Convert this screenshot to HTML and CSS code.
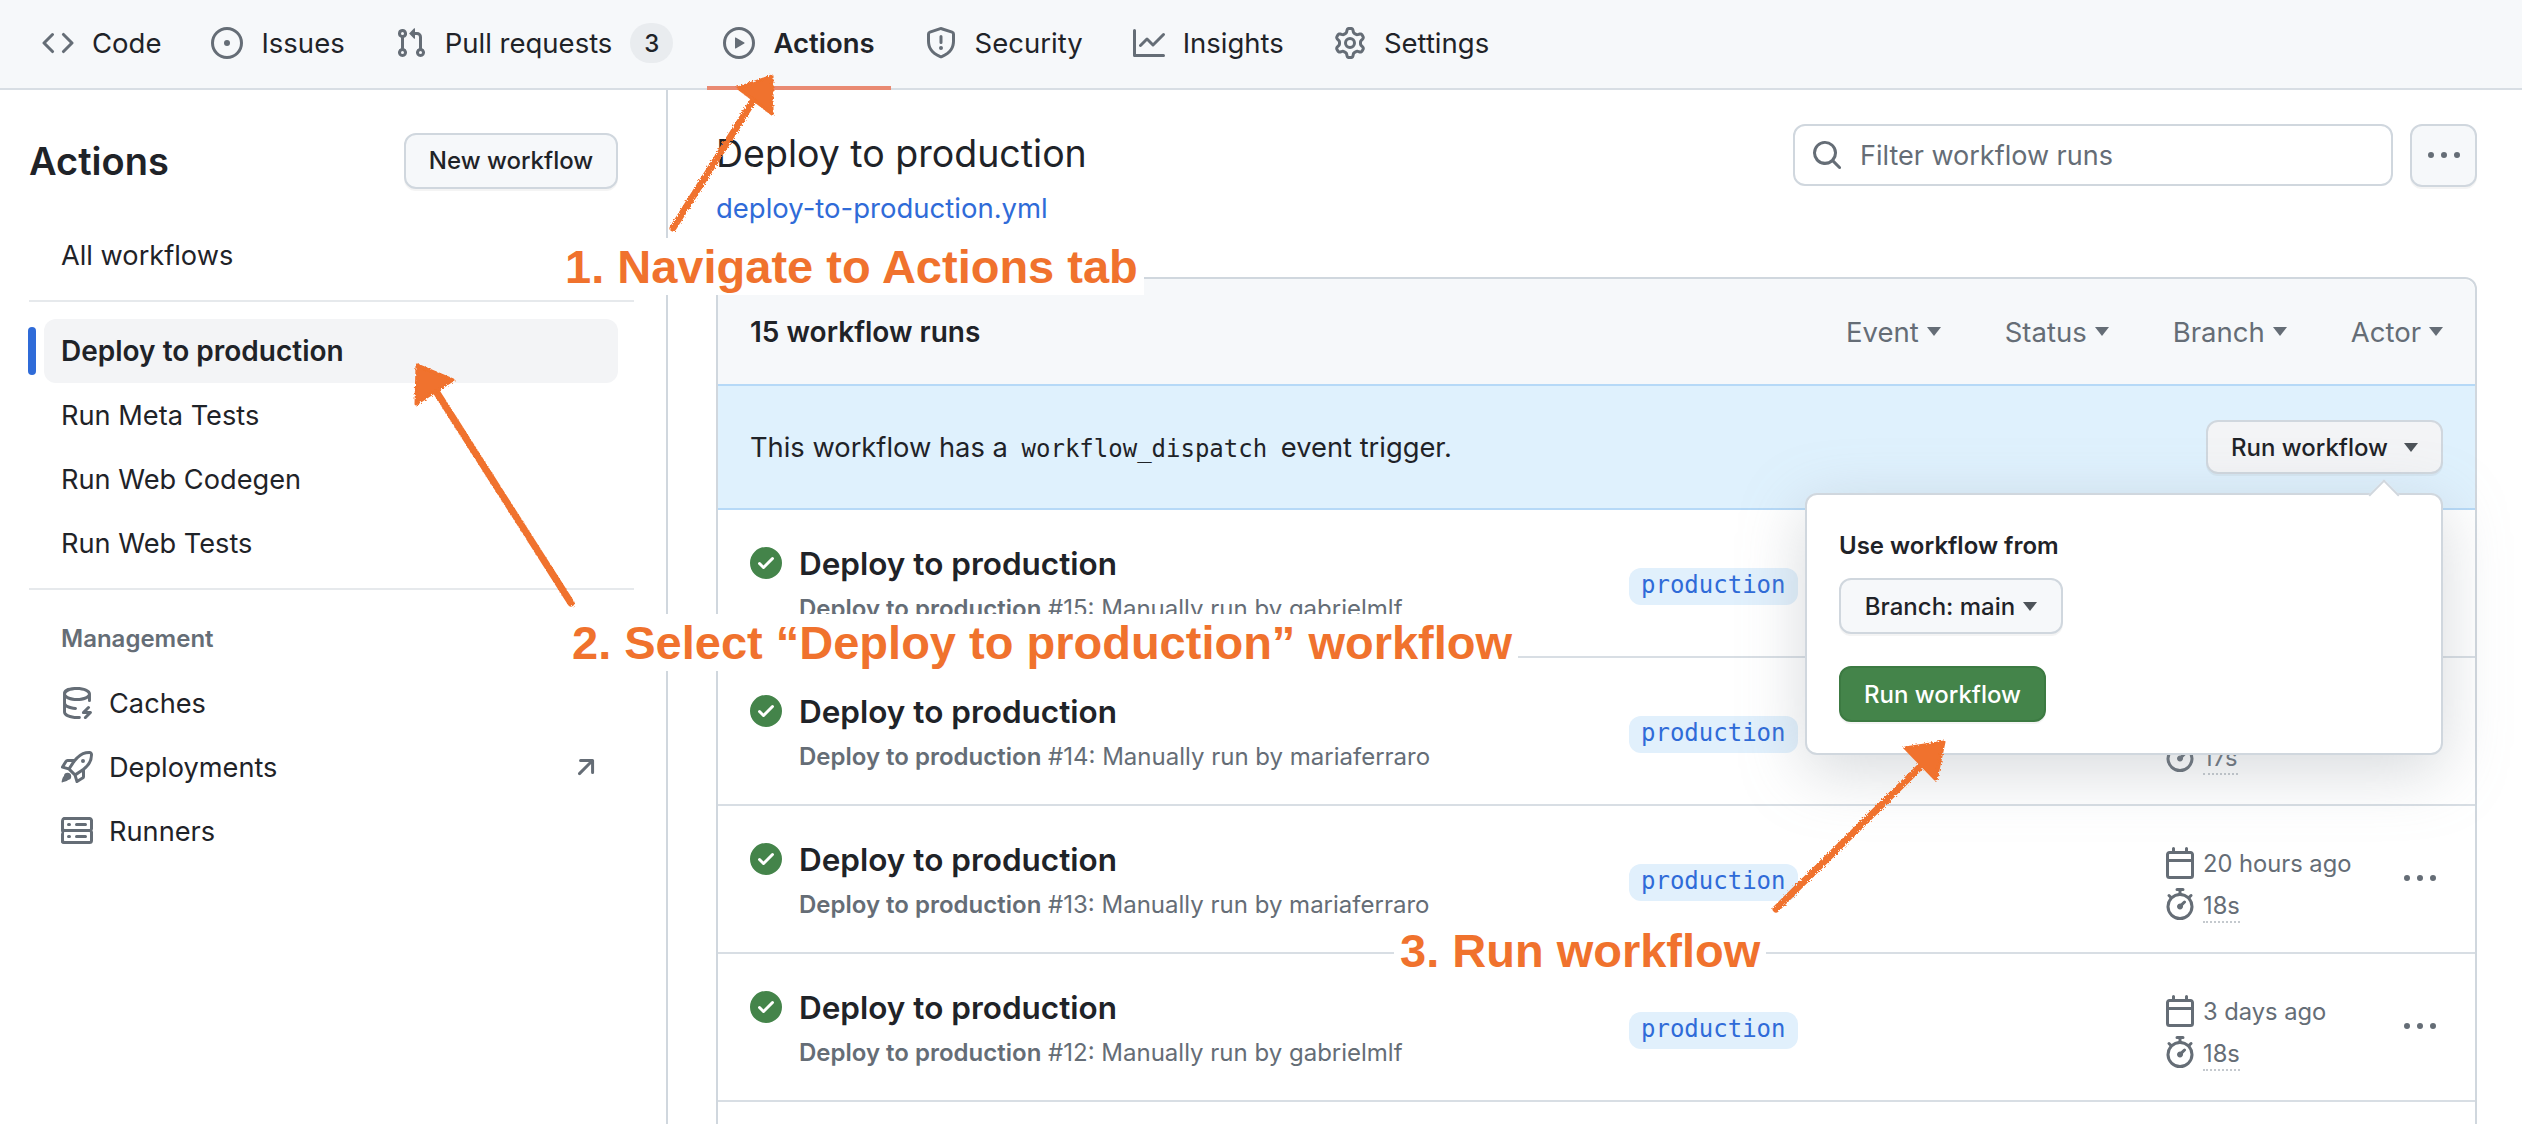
FILE: index.html
```html
<!DOCTYPE html>
<html lang="en">
<head>
  <meta charset="UTF-8" />
  <title>Actions - Deploy to production</title>
  <link rel="stylesheet" href="styles.css">
</head>
<body>
  <svg class="sprites" aria-hidden="true">
    <defs>
      <filter id="rough" x="-10%" y="-10%" width="120%" height="120%">
        <feTurbulence type="fractalNoise" baseFrequency="0.6" numOctaves="2" seed="4"/>
        <feDisplacementMap in="SourceGraphic" scale="4"/>
      </filter>
    </defs>
    <symbol id="i-code" viewBox="0 0 16 16"><path d="M4.72 3.22a.75.75 0 0 1 1.06 1.06L2.06 8l3.72 3.72a.75.75 0 1 1-1.06 1.06L.47 8.53a.75.75 0 0 1 0-1.06l4.25-4.25Zm6.56 0a.75.75 0 1 0-1.06 1.06L13.94 8l-3.72 3.72a.75.75 0 1 0 1.06 1.06l4.25-4.25a.75.75 0 0 0 0-1.06l-4.25-4.25Z"/></symbol>
    <symbol id="i-issue" viewBox="0 0 16 16"><path d="M8 9.5a1.5 1.5 0 1 0 0-3 1.5 1.5 0 0 0 0 3Z"/><path d="M8 0a8 8 0 1 1 0 16A8 8 0 0 1 8 0ZM1.5 8a6.5 6.5 0 1 0 13 0 6.5 6.5 0 0 0-13 0Z"/></symbol>
    <symbol id="i-pull" viewBox="0 0 16 16"><path d="M1.5 3.25a2.25 2.25 0 1 1 3 2.122v5.256a2.251 2.251 0 1 1-1.5 0V5.372A2.25 2.25 0 0 1 1.5 3.25Zm5.677-.177L9.573.677A.25.25 0 0 1 10 .854V2.5h1A2.5 2.5 0 0 1 13.5 5v5.628a2.251 2.251 0 1 1-1.5 0V5a1 1 0 0 0-1-1h-1v1.646a.25.25 0 0 1-.427.177L7.177 3.427a.25.25 0 0 1 0-.354ZM3.75 2.5a.75.75 0 1 0 0 1.5.75.75 0 0 0 0-1.5Zm0 9.5a.75.75 0 1 0 0 1.5.75.75 0 0 0 0-1.5Zm8.25.75a.75.75 0 1 0 1.5 0 .75.75 0 0 0-1.5 0Z"/></symbol>
    <symbol id="i-play" viewBox="0 0 16 16"><path d="M8 0a8 8 0 1 1 0 16A8 8 0 0 1 8 0ZM1.5 8a6.5 6.5 0 1 0 13 0 6.5 6.5 0 0 0-13 0Zm4.879-2.773 4.264 2.559a.25.25 0 0 1 0 .428l-4.264 2.559A.25.25 0 0 1 6 10.559V5.442a.25.25 0 0 1 .379-.215Z"/></symbol>
    <symbol id="i-shield" viewBox="0 0 16 16"><path d="M7.467.133a1.748 1.748 0 0 1 1.066 0l5.25 1.68A1.75 1.75 0 0 1 15 3.48V7c0 1.566-.32 3.182-1.303 4.682-.983 1.498-2.585 2.813-5.032 3.855a1.697 1.697 0 0 1-1.33 0c-2.447-1.042-4.049-2.357-5.032-3.855C1.32 10.182 1 8.566 1 7V3.48a1.75 1.75 0 0 1 1.217-1.667Zm.61 1.429a.25.25 0 0 0-.153 0l-5.25 1.68a.25.25 0 0 0-.174.238V7c0 1.358.275 2.666 1.057 3.86.784 1.194 2.121 2.34 4.366 3.297a.196.196 0 0 0 .154 0c2.245-.956 3.582-2.104 4.366-3.298C13.225 9.666 13.5 8.36 13.5 7V3.48a.251.251 0 0 0-.174-.237l-5.25-1.68ZM8.75 4.75v3a.75.75 0 0 1-1.5 0v-3a.75.75 0 0 1 1.5 0ZM9 10.5a1 1 0 1 1-2 0 1 1 0 0 1 2 0Z"/></symbol>
    <symbol id="i-graph" viewBox="0 0 16 16"><path d="M1.5 1.75V13.5h13.75a.75.75 0 0 1 0 1.5H.75a.75.75 0 0 1-.75-.75V1.75a.75.75 0 0 1 1.5 0Zm14.28 2.53-5.25 5.25a.75.75 0 0 1-1.06 0L7 7.06 4.28 9.78a.751.751 0 0 1-1.042-.018.751.751 0 0 1-.018-1.042l3.25-3.25a.75.75 0 0 1 1.06 0L10 7.94l4.72-4.72a.751.751 0 0 1 1.042.018.751.751 0 0 1 .018 1.042Z"/></symbol>
    <symbol id="i-gear" viewBox="0 0 16 16"><path d="M8 0a8.2 8.2 0 0 1 .701.031C9.444.095 9.99.645 10.16 1.29l.288 1.107c.018.066.079.158.212.224.231.114.454.243.668.386.123.082.233.09.299.071l1.103-.303c.644-.176 1.392.021 1.82.63.27.385.506.792.704 1.218.315.675.111 1.422-.364 1.891l-.814.806c-.049.048-.098.147-.088.294.016.257.016.515 0 .772-.01.147.038.246.088.294l.814.806c.475.469.679 1.216.364 1.891a7.977 7.977 0 0 1-.704 1.217c-.428.61-1.176.807-1.82.63l-1.102-.302c-.067-.019-.177-.011-.3.071a5.909 5.909 0 0 1-.668.386c-.133.066-.194.158-.211.224l-.29 1.106c-.168.646-.715 1.196-1.458 1.26a8.006 8.006 0 0 1-1.402 0c-.743-.064-1.289-.614-1.458-1.26l-.289-1.106c-.018-.066-.079-.158-.212-.224a5.738 5.738 0 0 1-.668-.386c-.123-.082-.233-.09-.299-.071l-1.103.303c-.644.176-1.392-.021-1.82-.63a8.12 8.12 0 0 1-.704-1.218c-.315-.675-.111-1.422.363-1.891l.815-.806c.05-.048.098-.147.088-.294a6.214 6.214 0 0 1 0-.772c.01-.147-.038-.246-.088-.294l-.815-.806C.635 6.045.431 5.298.746 4.623a7.92 7.92 0 0 1 .704-1.217c.428-.61 1.176-.807 1.82-.63l1.102.302c.067.019.177.011.3-.071.214-.143.437-.272.668-.386.133-.066.194-.158.211-.224l.29-1.106C6.009.645 6.556.095 7.299.03 7.53.01 7.764 0 8 0Zm-.571 1.525c-.036.003-.108.036-.137.146l-.289 1.105c-.147.561-.549.967-.998 1.189-.173.086-.34.183-.5.29-.417.278-.97.423-1.529.27l-1.103-.303c-.109-.03-.175.016-.195.045-.22.312-.412.644-.573.99-.014.031-.021.11.059.19l.815.806c.411.406.562.957.53 1.456a4.709 4.709 0 0 0 0 .582c.032.499-.119 1.05-.53 1.456l-.815.806c-.081.08-.073.159-.059.19.162.346.353.677.573.989.02.03.085.076.195.046l1.102-.303c.56-.153 1.113-.008 1.53.27.161.107.328.204.501.29.447.222.85.629.997 1.189l.289 1.105c.029.109.101.143.137.146a6.6 6.6 0 0 0 1.142 0c.036-.003.108-.036.137-.146l.289-1.105c.147-.561.549-.967.998-1.189.173-.086.34-.183.5-.29.417-.278.97-.423 1.529-.27l1.103.303c.109.029.175-.016.195-.045.22-.313.411-.644.573-.99.014-.031.021-.11-.059-.19l-.815-.806c-.411-.406-.562-.957-.53-1.456a4.709 4.709 0 0 0 0-.582c-.032-.499.119-1.05.53-1.456l.815-.806c.081-.08.073-.159.059-.19a6.464 6.464 0 0 0-.573-.989c-.02-.03-.085-.076-.195-.046l-1.102.303c-.56.153-1.113.008-1.53-.27a4.44 4.44 0 0 0-.501-.29c-.447-.222-.85-.629-.997-1.189l-.289-1.105c-.029-.11-.101-.143-.137-.146a6.6 6.6 0 0 0-1.142 0ZM11 8a3 3 0 1 1-6 0 3 3 0 0 1 6 0ZM9.5 8a1.5 1.5 0 1 0-3.001.001A1.5 1.5 0 0 0 9.5 8Z"/></symbol>
    <symbol id="i-search" viewBox="0 0 16 16"><path d="M10.68 11.74a6 6 0 0 1-7.922-8.982 6 6 0 0 1 8.982 7.922l3.04 3.04a.749.749 0 0 1-.326 1.275.749.749 0 0 1-.734-.215ZM11.5 7a4.499 4.499 0 1 0-8.997 0A4.499 4.499 0 0 0 11.5 7Z"/></symbol>
    <symbol id="i-kebab" viewBox="0 0 16 16"><path d="M8 9a1.5 1.5 0 1 0 0-3 1.5 1.5 0 0 0 0 3ZM1.5 9a1.5 1.5 0 1 0 0-3 1.5 1.5 0 0 0 0 3Zm13 0a1.5 1.5 0 1 0 0-3 1.5 1.5 0 0 0 0 3Z"/></symbol>
    <symbol id="i-check" viewBox="0 0 16 16"><path d="M8 16A8 8 0 1 1 8 0a8 8 0 0 1 0 16Zm3.78-9.72a.751.751 0 0 0-.018-1.042.751.751 0 0 0-1.042-.018L6.75 9.19 5.28 7.72a.751.751 0 0 0-1.042.018.751.751 0 0 0-.018 1.042l2 2a.75.75 0 0 0 1.06 0Z"/></symbol>
    <symbol id="i-calendar" viewBox="0 0 16 16"><path d="M4.75 0a.75.75 0 0 1 .75.75V2h5V.75a.75.75 0 0 1 1.5 0V2h1.25c.966 0 1.75.784 1.75 1.75v10.5A1.75 1.75 0 0 1 13.25 16H2.75A1.75 1.75 0 0 1 1 14.25V3.75C1 2.784 1.784 2 2.75 2H4V.75A.75.75 0 0 1 4.75 0ZM2.5 7.5v6.75c0 .138.112.25.25.25h10.5a.25.25 0 0 0 .25-.25V7.5Zm10.75-4H2.75a.25.25 0 0 0-.25.25V6h11V3.75a.25.25 0 0 0-.25-.25Z"/></symbol>
    <symbol id="i-stopwatch" viewBox="0 0 16 16"><path d="M5.75.75A.75.75 0 0 1 6.5 0h3a.75.75 0 0 1 0 1.5h-.75v1l-.001.041a6.724 6.724 0 0 1 3.464 1.435l.007-.006.75-.75a.749.749 0 0 1 1.275.326.749.749 0 0 1-.215.734l-.75.75-.006.007a6.75 6.75 0 1 1-10.548 0L2.72 5.03l-.75-.75a.751.751 0 0 1 .018-1.042.751.751 0 0 1 1.042-.018l.75.75.007.006A6.72 6.72 0 0 1 7.25 2.541V1.5H6.5a.75.75 0 0 1-.75-.75ZM8 14.5a5.25 5.25 0 1 0-.001-10.501A5.25 5.25 0 0 0 8 14.5Zm.389-6.7 1.33-1.33a.75.75 0 1 1 1.061 1.06L9.45 8.861A1.503 1.503 0 0 1 8 10.75a1.499 1.499 0 1 1 .389-2.95Z"/></symbol>
    <symbol id="i-cache" viewBox="0 0 16 16"><path d="M2.5 5.724V8c0 .248.238.7 1.169 1.159.874.43 2.144.745 3.62.822a.75.75 0 1 1-.078 1.498c-1.622-.085-3.102-.432-4.204-.975a5.565 5.565 0 0 1-.507-.28V12.5c0 .133.058.318.282.551.227.237.591.483 1.101.707 1.015.448 2.47.742 4.117.742.39 0 .77-.017 1.137-.049a.75.75 0 0 1 .126 1.494c-.41.035-.83.055-1.263.055-1.795 0-3.46-.317-4.72-.871-.63-.278-1.18-.625-1.58-1.041-.402-.42-.68-.94-.68-1.538v-9.5c0-.598.278-1.118.68-1.538.4-.416.95-.763 1.58-1.041C4.54.317 6.205 0 8 0c1.795 0 3.46.317 4.72.871.63.278 1.18.625 1.58 1.041.402.42.68.94.68 1.538v3.25a.75.75 0 0 1-1.5 0V5.724c-.285.177-.6.338-.936.48-1.223.52-2.88.796-4.544.796-1.664 0-3.32-.276-4.544-.796a7.048 7.048 0 0 1-.936-.48ZM2.5 3.5c0 .133.058.318.282.551.227.237.591.483 1.101.707C4.898 5.206 6.353 5.5 8 5.5s3.102-.294 4.117-.742c.51-.224.874-.47 1.101-.707.224-.233.282-.418.282-.551 0-.133-.058-.318-.282-.551-.227-.237-.591-.483-1.101-.707C11.102 1.794 9.647 1.5 8 1.5s-3.102.294-4.117.742c-.51.224-.874.47-1.101.707-.224.233-.282.418-.282.551Zm12.78 6.28-2.25 2.25h1.69a.75.75 0 0 1 .53 1.28l-2.5 2.5a.75.75 0 1 1-1.06-1.06l1.22-1.22h-1.69a.75.75 0 0 1-.53-1.28l2.5-2.5a.75.75 0 1 1 1.06 1.06Z"/></symbol>
    <symbol id="i-rocket" viewBox="0 0 16 16"><path d="M14.064 0h.186C15.216 0 16 .784 16 1.75v.186a8.752 8.752 0 0 1-2.564 6.186l-.458.459c-.314.314-.641.616-.979.904v3.207c0 .608-.315 1.172-.833 1.49l-2.774 1.707a.749.749 0 0 1-1.11-.418l-.954-3.102a1.214 1.214 0 0 1-.145-.125L3.754 9.816a1.218 1.218 0 0 1-.124-.145L.528 8.717a.749.749 0 0 1-.418-1.11l1.71-2.774A1.748 1.748 0 0 1 3.31 4h3.204c.288-.338.59-.665.904-.979l.459-.458A8.749 8.749 0 0 1 14.064 0ZM8.938 3.623h-.002l-.458.458c-.76.76-1.437 1.598-2.02 2.5l-1.5 2.317 2.143 2.143 2.317-1.5c.902-.583 1.74-1.26 2.499-2.02l.459-.458a7.25 7.25 0 0 0 2.123-5.127V1.75a.25.25 0 0 0-.25-.25h-.186a7.249 7.249 0 0 0-5.125 2.123ZM3.56 14.56c-.732.732-2.334 1.045-3.005 1.148a.234.234 0 0 1-.201-.064.234.234 0 0 1-.064-.201c.103-.671.416-2.273 1.15-3.003a1.847 1.847 0 1 1 2.12 2.12Zm6.94-3.935c-.088.06-.177.118-.266.175l-2.35 1.521.548 1.783 1.949-1.2a.25.25 0 0 0 .119-.213ZM3.678 8.116 5.2 5.766c.058-.09.117-.178.176-.266H3.309a.25.25 0 0 0-.213.119l-1.2 1.95ZM12 5a1 1 0 1 1-2 0 1 1 0 0 1 2 0Z"/></symbol>
    <symbol id="i-server" viewBox="0 0 16 16"><path d="M1.75 1h12.5c.966 0 1.75.784 1.75 1.75v4c0 .372-.116.717-.314 1 .198.283.314.628.314 1v4a1.75 1.75 0 0 1-1.75 1.75H1.75A1.75 1.75 0 0 1 0 13.75v-4c0-.372.116-.717.314-1a1.739 1.739 0 0 1-.314-1v-4C0 1.784.784 1 1.75 1ZM1.5 2.75v4c0 .138.112.25.25.25h12.5a.25.25 0 0 0 .25-.25v-4a.25.25 0 0 0-.25-.25H1.75a.25.25 0 0 0-.25.25Zm.25 5.75a.25.25 0 0 0-.25.25v4c0 .138.112.25.25.25h12.5a.25.25 0 0 0 .25-.25v-4a.25.25 0 0 0-.25-.25ZM7 4.75A.75.75 0 0 1 7.75 4h4.5a.75.75 0 0 1 0 1.5h-4.5A.75.75 0 0 1 7 4.75ZM7.75 10h4.5a.75.75 0 0 1 0 1.5h-4.5a.75.75 0 0 1 0-1.5ZM3 4.75A.75.75 0 0 1 3.75 4h.5a.75.75 0 0 1 0 1.5h-.5A.75.75 0 0 1 3 4.75ZM3.75 10h.5a.75.75 0 0 1 0 1.5h-.5a.75.75 0 0 1 0-1.5Z"/></symbol>
    <symbol id="i-arrow" viewBox="0 0 16 16"><path d="M4.53 4.75A.75.75 0 0 1 5.28 4h6.01a.75.75 0 0 1 .75.75v6.01a.75.75 0 0 1-1.5 0v-4.2l-5.26 5.261a.749.749 0 0 1-1.275-.326.749.749 0 0 1 .215-.734L9.48 5.5h-4.2a.75.75 0 0 1-.75-.75Z"/></symbol>
  </svg>

  <nav class="tabs">
    <a class="tab"><svg class="icon"><use href="#i-code"/></svg>Code</a>
    <a class="tab"><svg class="icon"><use href="#i-issue"/></svg>Issues</a>
    <a class="tab"><svg class="icon"><use href="#i-pull"/></svg>Pull requests<span class="counter">3</span></a>
    <a class="tab selected"><svg class="icon"><use href="#i-play"/></svg>Actions</a>
    <a class="tab"><svg class="icon"><use href="#i-shield"/></svg>Security</a>
    <a class="tab"><svg class="icon"><use href="#i-graph"/></svg>Insights</a>
    <a class="tab"><svg class="icon"><use href="#i-gear"/></svg>Settings</a>
  </nav>

  <div class="page">
    <aside class="sidebar">
      <div class="side-head">
        <h2>Actions</h2>
        <button class="btn new-btn">New workflow</button>
      </div>
      <a class="side-item">All workflows</a>
      <div class="side-line"></div>
      <a class="side-item current">Deploy to production</a>
      <a class="side-item">Run Meta Tests</a>
      <a class="side-item">Run Web Codegen</a>
      <a class="side-item">Run Web Tests</a>
      <div class="side-line"></div>
      <div class="side-label">Management</div>
      <a class="side-item with-icon"><svg class="icon"><use href="#i-cache"/></svg>Caches</a>
      <a class="side-item with-icon"><svg class="icon"><use href="#i-rocket"/></svg>Deployments<svg class="icon out"><use href="#i-arrow"/></svg></a>
      <a class="side-item with-icon"><svg class="icon"><use href="#i-server"/></svg>Runners</a>
    </aside>

    <main class="main">
      <div class="main-head">
        <div class="main-title">
          <h1>Deploy to production</h1>
          <a class="file-link">deploy-to-production.yml</a>
        </div>
        <div class="filter">
          <div class="search"><svg class="icon"><use href="#i-search"/></svg>Filter workflow runs</div>
          <button class="btn more-btn"><svg class="icon"><use href="#i-kebab"/></svg></button>
        </div>
      </div>

      <section class="box">
        <div class="box-head">
          <strong>15 workflow runs</strong>
          <div class="box-filters">
            <span class="drop">Event<i class="caret"></i></span>
            <span class="drop">Status<i class="caret"></i></span>
            <span class="drop">Branch<i class="caret"></i></span>
            <span class="drop">Actor<i class="caret"></i></span>
          </div>
        </div>

        <div class="banner">
          <span>This workflow has a <code>workflow_dispatch</code> event trigger.</span>
          <button class="btn run-toggle">Run workflow<i class="caret dark"></i></button>
          <div class="popover">
            <div class="pop-title">Use workflow from</div>
            <button class="btn branch-btn">Branch: main<i class="caret dark"></i></button>
            <button class="btn green-btn">Run workflow</button>
          </div>
        </div>

        <div class="run">
          <svg class="icon ok"><use href="#i-check"/></svg>
          <div class="run-text">
            <div class="run-title">Deploy to production</div>
            <div class="run-sub"><b>Deploy to production</b> #15: Manually run by gabrielmlf</div>
          </div>
          <span class="branch">production</span>
          <div class="run-time">
            <div class="when"><svg class="icon"><use href="#i-calendar"/></svg>20 hours ago</div>
            <div class="took"><svg class="icon"><use href="#i-stopwatch"/></svg><span>18s</span></div>
          </div>
          <svg class="icon dots"><use href="#i-kebab"/></svg>
        </div>
        <div class="run">
          <svg class="icon ok"><use href="#i-check"/></svg>
          <div class="run-text">
            <div class="run-title">Deploy to production</div>
            <div class="run-sub"><b>Deploy to production</b> #14: Manually run by mariaferraro</div>
          </div>
          <span class="branch">production</span>
          <div class="run-time">
            <div class="when"><svg class="icon"><use href="#i-calendar"/></svg>20 hours ago</div>
            <div class="took"><svg class="icon"><use href="#i-stopwatch"/></svg><span>17s</span></div>
          </div>
          <svg class="icon dots"><use href="#i-kebab"/></svg>
        </div>
        <div class="run">
          <svg class="icon ok"><use href="#i-check"/></svg>
          <div class="run-text">
            <div class="run-title">Deploy to production</div>
            <div class="run-sub"><b>Deploy to production</b> #13: Manually run by mariaferraro</div>
          </div>
          <span class="branch">production</span>
          <div class="run-time">
            <div class="when"><svg class="icon"><use href="#i-calendar"/></svg>20 hours ago</div>
            <div class="took"><svg class="icon"><use href="#i-stopwatch"/></svg><span>18s</span></div>
          </div>
          <svg class="icon dots"><use href="#i-kebab"/></svg>
        </div>
        <div class="run">
          <svg class="icon ok"><use href="#i-check"/></svg>
          <div class="run-text">
            <div class="run-title">Deploy to production</div>
            <div class="run-sub"><b>Deploy to production</b> #12: Manually run by gabrielmlf</div>
          </div>
          <span class="branch">production</span>
          <div class="run-time">
            <div class="when"><svg class="icon"><use href="#i-calendar"/></svg>3 days ago</div>
            <div class="took"><svg class="icon"><use href="#i-stopwatch"/></svg><span>18s</span></div>
          </div>
          <svg class="icon dots"><use href="#i-kebab"/></svg>
        </div>
      </section>
    </main>
  </div>

  <!-- hand drawn notes on top of the screenshot -->
  <div class="note note-1">1. Navigate to Actions tab</div>
  <div class="note note-2">2. Select “Deploy to production” workflow</div>
  <div class="note note-3">3. Run workflow</div>
  <svg class="arrows" viewBox="0 0 2522 1124">
    <g filter="url(#rough)">
      <path class="shaft" d="M673 228 L760 90"/>
      <path class="head" d="M772 76 L738 88 L772 114 Z"/>
      <path class="shaft" d="M571 603 L432 385"/>
      <path class="head" d="M417 365 L453 380 L416 404 Z"/>
      <path class="shaft" d="M1776 909 L1925 762"/>
      <path class="head" d="M1944 742 L1905 748 L1936 780 Z"/>
    </g>
  </svg>
</body>
</html>
```

FILE: styles.css
```css
* {
  box-sizing: border-box;
}
body {
  margin: 0;
  height: 1124px;
  overflow: hidden;
  position: relative;
  background: #fff;
  color: #1f2328;
  font-family: Inter, "Noto Sans", sans-serif;
  font-size: 28px;
}
.sprites {
  position: absolute;
  width: 0;
  height: 0;
}
.icon {
  width: 32px;
  height: 32px;
  flex: none;
  fill: #656d76;
}
button {
  font-family: inherit;
}

/* top tabs */
.tabs {
  display: flex;
  gap: 18px;
  height: 90px;
  padding-left: 26px;
  background: #f6f8fa;
  border-bottom: 2px solid #d8dee4;
}
.tab {
  display: flex;
  align-items: center;
  gap: 18px;
  height: 90px;
  padding: 0 16px;
  border-bottom: 4px solid transparent;
  font-size: 27.5px;
  white-space: nowrap;
}
.tab.selected {
  font-weight: 600;
  border-bottom-color: #e98a72;
}
.counter {
  display: flex;
  align-items: center;
  justify-content: center;
  width: 43px;
  height: 40px;
  margin-left: 0;
  border-radius: 20px;
  background: #e9ecef;
  font-size: 24px;
  font-weight: 500;
}

.page {
  display: flex;
  height: 1034px;
}

/* left column */
.sidebar {
  width: 668px;
  flex: none;
  padding: 0 48px 0 29px;
  border-right: 2px solid #d0d7de;
}
.side-head {
  display: flex;
  align-items: center;
  justify-content: space-between;
  height: 133px;
  padding-top: 8px;
}
.side-head h2 {
  margin: 0;
  font-size: 38px;
  font-weight: 600;
}
.btn {
  background: #f6f8fa;
  border: 2px solid #d0d7de;
  border-radius: 12px;
  box-shadow: 0 2px 0 rgba(31, 35, 40, 0.05);
  color: #1f2328;
  font-size: 24px;
  font-weight: 500;
  padding: 0;
}
.new-btn {
  width: 214px;
  height: 56px;
}
.side-item {
  display: flex;
  align-items: center;
  height: 64px;
  padding-left: 32px;
  font-size: 27.2px;
  border-radius: 12px;
  position: relative;
}
.side-item.current {
  margin-left: 15px;
  padding-left: 17px;
  background: #f3f4f6;
  font-size: 28px;
  font-weight: 600;
}
.side-item.current::before {
  content: "";
  position: absolute;
  left: -16px;
  top: 8px;
  width: 8px;
  height: 48px;
  border-radius: 4px;
  background: #2f6bd8;
}
.side-line {
  height: 2px;
  margin: 13px -16px 17px 0;
  background: #e6e9ec;
}
.side-label {
  height: 64px;
  padding: 17px 0 0 32px;
  font-size: 24px;
  font-weight: 600;
  color: #656d76;
}
.with-icon {
  gap: 16px;
}
.out {
  margin-left: auto;
  margin-right: 16px;
}

/* right column */
.main {
  flex: 1;
  padding: 0 45px 0 48px;
}
.main-head {
  display: flex;
  justify-content: space-between;
  height: 187px;
  padding-top: 34px;
}
.main-title {
  padding-top: 5px;
}
.main-head h1 {
  margin: 0;
  font-size: 37.5px;
  font-weight: 400;
  line-height: 50px;
}
.file-link {
  display: block;
  margin-top: 10px;
  font-size: 27.5px;
  line-height: 38px;
  color: #2f6bd8;
}
.filter {
  display: flex;
  gap: 17px;
}
.search {
  display: flex;
  align-items: center;
  gap: 17px;
  width: 600px;
  height: 62px;
  padding-left: 16px;
  border: 2px solid #d0d7de;
  border-radius: 12px;
  color: #656d76;
  font-size: 27px;
}
.more-btn {
  display: flex;
  align-items: center;
  justify-content: center;
  width: 67px;
  height: 63px;
}

.box {
  border: 2px solid #d0d7de;
  border-radius: 12px;
  min-height: 960px;
}
.box-head {
  display: flex;
  align-items: center;
  justify-content: space-between;
  height: 107px;
  padding: 0 32px;
  background: #f6f8fa;
  border-bottom: 2px solid #b6d9f7;
  border-radius: 12px 12px 0 0;
}
.box-head strong {
  font-size: 28px;
  font-weight: 600;
}
.box-filters {
  display: flex;
  gap: 64px;
}
.drop {
  display: flex;
  align-items: center;
  gap: 8px;
  color: #656d76;
  font-size: 27.5px;
}
.caret {
  display: inline-block;
  width: 0;
  height: 0;
  border-style: solid;
  border-width: 9px 7px 0;
  border-color: #656d76 transparent transparent;
}
.caret.dark {
  border-color: #4d5359 transparent transparent;
}
.banner {
  position: relative;
  display: flex;
  align-items: center;
  justify-content: space-between;
  height: 124px;
  padding: 0 32px;
  background: #dff1fd;
  border-bottom: 2px solid #b6d9f7;
  font-size: 27.3px;
}
code {
  font-family: "DejaVu Sans Mono", "Liberation Mono", monospace;
  font-size: 24px;
  margin: 0 6px;
}
.run-toggle {
  display: flex;
  align-items: center;
  justify-content: center;
  gap: 16px;
  width: 237px;
  height: 54px;
  background: #f3f4f6;
}
.popover {
  position: absolute;
  z-index: 2;
  top: 107px;
  right: 32px;
  width: 638px;
  height: 262px;
  padding: 34px 32px;
  background: #fff;
  border: 2px solid #d0d7de;
  border-radius: 12px;
  box-shadow: 0 16px 64px rgba(140, 149, 159, 0.35);
}
.popover::before {
  content: "";
  position: absolute;
  top: -11px;
  right: 46px;
  width: 20px;
  height: 20px;
  background: #fff;
  border-left: 2px solid #d0d7de;
  border-top: 2px solid #d0d7de;
  transform: rotate(45deg);
}
.pop-title {
  font-size: 24px;
  font-weight: 600;
  line-height: 34px;
}
.branch-btn {
  display: flex;
  align-items: center;
  justify-content: center;
  gap: 8px;
  width: 224px;
  height: 56px;
  margin-top: 15px;
}
.green-btn {
  display: block;
  width: 207px;
  height: 56px;
  margin-top: 32px;
  background: #44844a;
  border-color: #3c7a42;
  color: #fff;
}

.run {
  display: grid;
  grid-template-columns: 49px 830px 535px 240px 1fr;
  height: 148px;
  padding-left: 32px;
  border-bottom: 2px solid #d8dee4;
}
.ok {
  fill: #44844a;
  margin-top: 37px;
}
.run-title {
  margin-top: 33px;
  font-size: 31.5px;
  font-weight: 600;
  line-height: 42px;
}
.run-sub {
  margin-top: 7px;
  font-size: 24px;
  line-height: 34px;
  color: #656d76;
}
.run-sub b {
  font-weight: 600;
}
.branch {
  justify-self: start;
  align-self: start;
  margin-top: 58px;
  height: 37px;
  padding: 0 12px;
  border-radius: 12px;
  background: #e1f0fc;
  color: #2f6bd8;
  font-family: "DejaVu Sans Mono", "Liberation Mono", monospace;
  font-size: 24px;
  line-height: 35px;
}
.run-time {
  padding-top: 41px;
  font-size: 23.7px;
  color: #656d76;
}
.when,
.took {
  display: flex;
  align-items: center;
  gap: 7px;
  height: 32px;
}
.took {
  margin-top: 9px;
}
.took span {
  border-bottom: 2px dotted #c4c9ce;
  line-height: 31px;
  margin-top: 5px;
}
.dots {
  margin-top: 57px;
}

/* orange notes */
.note {
  position: absolute;
  z-index: 5;
  height: 57px;
  padding: 0 6px;
  background: #fff;
  color: #f0722d;
  font-family: "Liberation Sans", Arial, sans-serif;
  font-size: 47px;
  font-weight: 700;
  line-height: 57px;
  white-space: nowrap;
}
.note-1 {
  left: 559px;
  top: 238px;
}
.note-2 {
  left: 566px;
  top: 614px;
}
.note-3 {
  left: 1394px;
  top: 922px;
}
.arrows {
  position: absolute;
  z-index: 6;
  left: 0;
  top: 0;
  width: 2522px;
  height: 1124px;
  pointer-events: none;
}
.shaft {
  fill: none;
  stroke: #f0722d;
  stroke-width: 7;
  stroke-linecap: round;
}
.head {
  fill: #f0722d;
  stroke: #f0722d;
  stroke-width: 3;
  stroke-linejoin: round;
}
```
